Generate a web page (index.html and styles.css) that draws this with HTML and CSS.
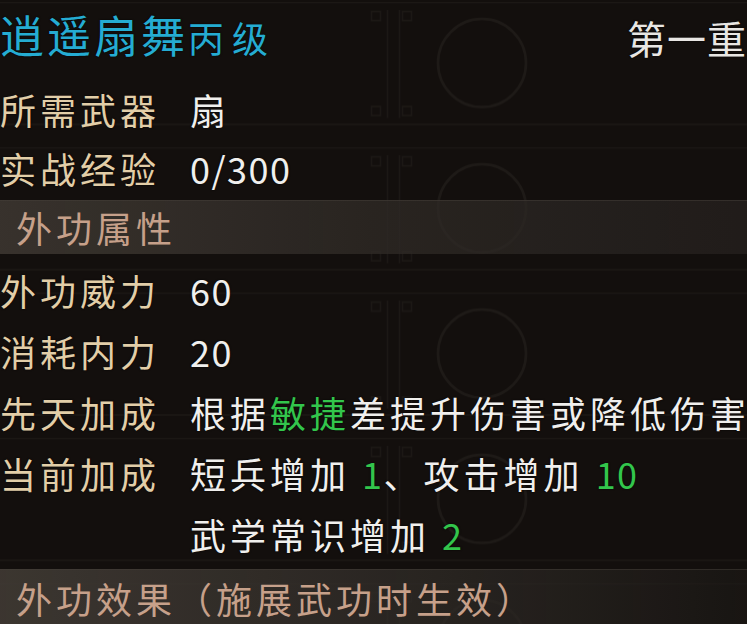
FILE: index.html
```html
<!DOCTYPE html>
<html lang="zh-CN">
<head>
    <meta charset="UTF-8">
    <meta name="viewport" content="width=device-width, initial-scale=1.0">
    <title>逍遥扇舞 - 武学详情</title>
    <link rel="stylesheet" href="styles.css">
</head>
<body>

    <div class="skill-card">
        <!-- faint scroll frames drawn behind the text -->
        <svg class="backdrop" width="747" height="624" aria-hidden="true">
            <defs>
                <pattern id="frame" patternUnits="userSpaceOnUse" x="0" y="2" width="747" height="145.3">
                    <path d="M0 0.5H747M0 122.5H747" class="frame-line"/>
                    <path d="M387.5 8V116M399.5 8V116" class="frame-line"/>
                    <rect x="371.5" y="9.5" width="9" height="9" class="frame-line"/>
                    <rect x="402.5" y="9.5" width="9" height="9" class="frame-line"/>
                    <rect x="371.5" y="104.5" width="9" height="9" class="frame-line"/>
                    <rect x="402.5" y="104.5" width="9" height="9" class="frame-line"/>
                    <circle cx="482" cy="61" r="44" class="frame-ring"/>
                </pattern>
            </defs>
            <rect width="747" height="624" fill="url(#frame)"/>
        </svg>

        <div class="title-row">
            <h1 class="skill-name">逍遥扇舞<span class="grade">丙级</span></h1>
            <span class="tier">第一重</span>
        </div>

        <div class="stats stats-basic">
            <div class="stat-row">
                <span class="label">所需武器</span>
                <span class="value">扇</span>
            </div>
            <div class="stat-row">
                <span class="label">实战经验</span>
                <span class="value num">0/300</span>
            </div>
        </div>

        <div class="section-bar">外功属性</div>

        <div class="stats stats-attack">
            <div class="stat-row">
                <span class="label">外功威力</span>
                <span class="value num">60</span>
            </div>
            <div class="stat-row">
                <span class="label">消耗内力</span>
                <span class="value num">20</span>
            </div>
            <div class="stat-row">
                <span class="label">先天加成</span>
                <span class="value">根据<em class="hl">敏捷</em>差提升伤害或降低伤害</span>
            </div>
            <div class="stat-row">
                <span class="label">当前加成</span>
                <div class="value value-lines">
                    <span>短兵增加 <em class="hl num">1</em>、攻击增加 <em class="hl num">10</em></span>
                    <span>武学常识增加 <em class="hl num">2</em></span>
                </div>
            </div>
        </div>

        <div class="section-bar section-bar-last">外功效果（施展武功时生效）</div>
    </div>

</body>
</html>
```

FILE: styles.css
```css
body {
    margin: 0;
    padding: 0;
    background-color: #130f0d;
    font-family: "Noto Sans CJK SC", "Noto Sans", sans-serif;
    overflow: hidden;
}

.skill-card {
    position: relative;
    width: 747px;
    height: 624px;
    overflow: hidden;
    background-color: #130f0d;
    white-space: nowrap;
}

.backdrop {
    position: absolute;
    top: 0;
    left: 0;
    z-index: 0;
}

.frame-line {
    fill: none;
    stroke: #1c1815;
    stroke-width: 1.5;
}

.frame-ring {
    fill: none;
    stroke: #1e1a17;
    stroke-width: 2.5;
}

.title-row,
.stats,
.section-bar {
    position: relative;
    z-index: 1;
}

.title-row {
    display: flex;
    justify-content: space-between;
    align-items: center;
    height: 70px;
    padding-bottom: 10px;
}

.skill-name {
    margin: 0;
    font-size: 44px;
    font-weight: normal;
    letter-spacing: 3px;
    line-height: 60px;
    color: #25acd2;
    text-shadow: 0 0 2px rgba(0, 0, 0, 0.9);
}

.grade {
    font-size: 36px;
    letter-spacing: 8px;
}

.tier {
    margin-top: 4px;
    font-size: 39px;
    letter-spacing: 1px;
    color: #e8e6e3;
    text-shadow: 0 0 2px rgba(0, 0, 0, 0.9);
}

.stats {
    font-size: 36px;
    letter-spacing: 4px;
    text-shadow: 0 0 2px rgba(0, 0, 0, 0.9);
}

.stats-basic {
    line-height: 59px;
}

.stats-attack {
    line-height: 61px;
    padding-top: 6px;
}

.stat-row {
    display: flex;
    align-items: flex-start;
}

.label {
    width: 190px;
    flex-shrink: 0;
    color: #e2cea8;
}

.value {
    color: #f0efed;
}

.num {
    letter-spacing: 1.5px;
}

.value-lines {
    display: flex;
    flex-direction: column;
}

.hl {
    font-style: normal;
    color: #33c54c;
}

.section-bar {
    height: 53px;
    margin-top: 2px;
    padding-left: 16px;
    font-size: 36px;
    letter-spacing: 4px;
    line-height: 53px;
    color: #c6a08a;
    background: linear-gradient(to right, rgba(62, 56, 50, 0.85), rgba(48, 43, 39, 0.75) 50%, rgba(38, 34, 31, 0.7));
    border-top: 1px solid rgba(70, 64, 58, 0.5);
}

.section-bar-last {
    height: 56px;
    margin-top: 4px;
    line-height: 56px;
    background: linear-gradient(to right, rgba(64, 58, 52, 0.9), rgba(46, 42, 38, 0.75) 60%, rgba(28, 25, 22, 0.6));
}
```
